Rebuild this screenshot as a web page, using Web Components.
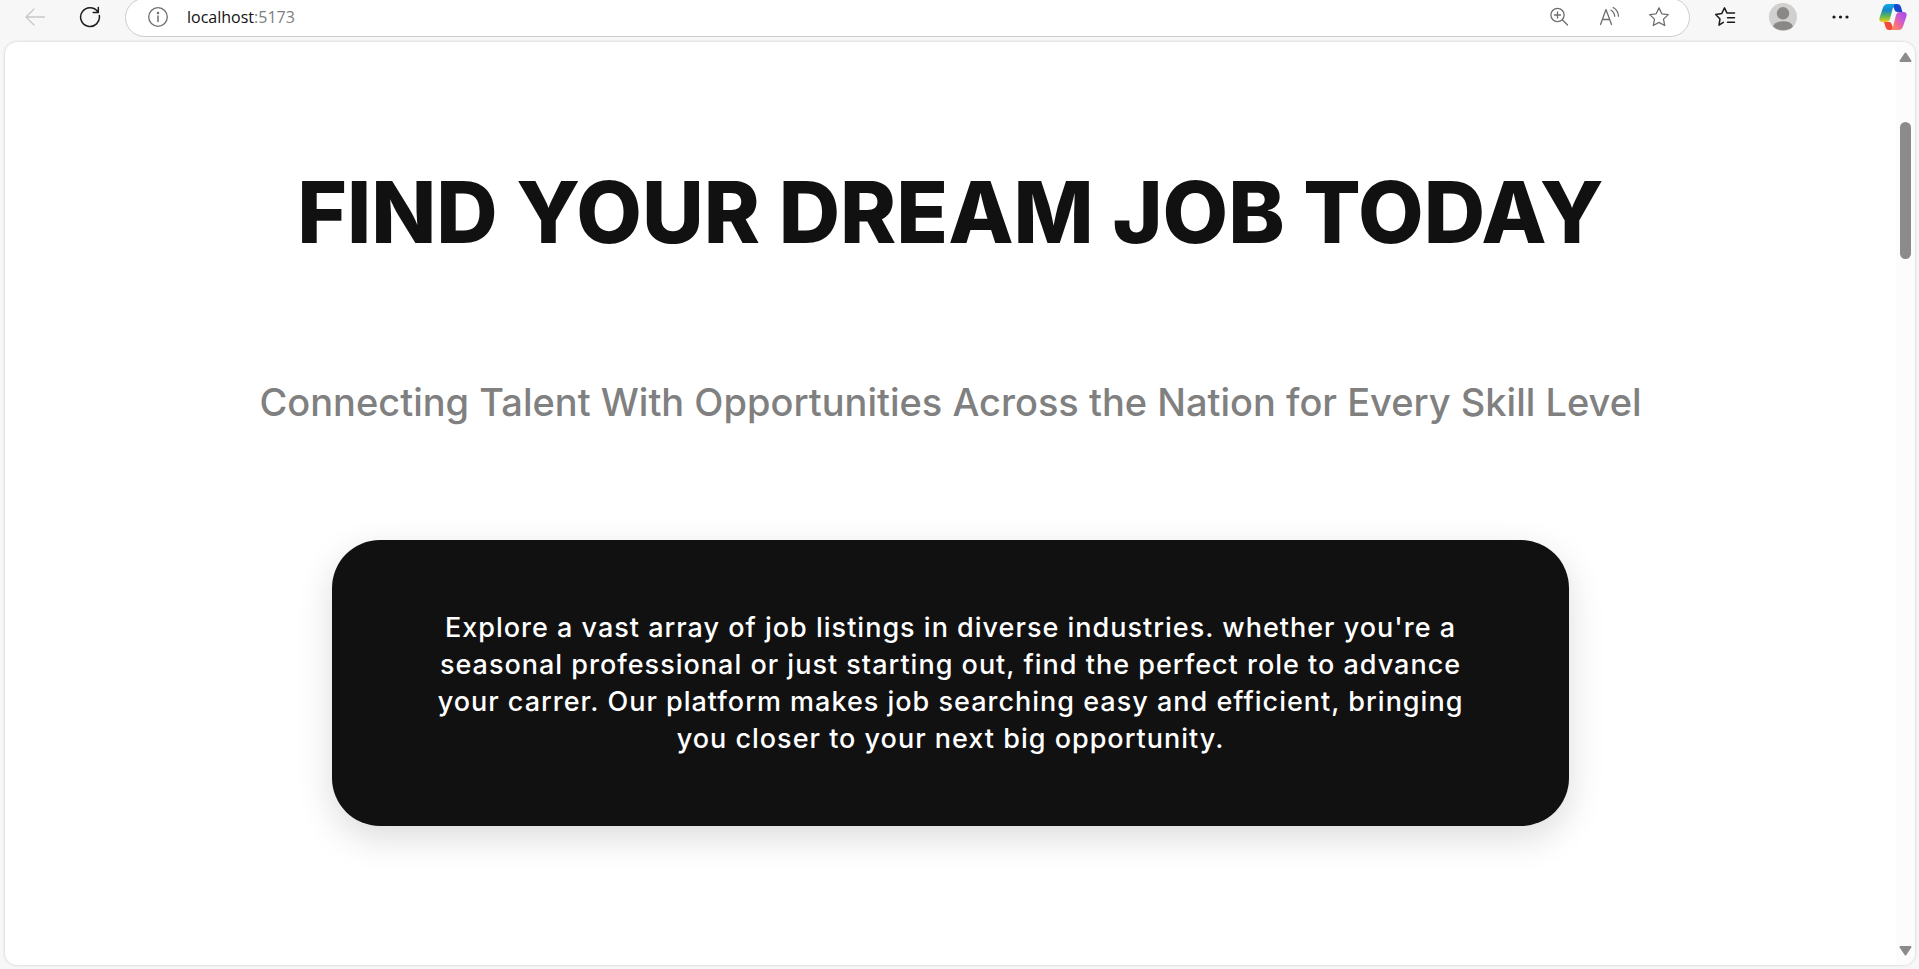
<!DOCTYPE html>
<html lang="en">
<head>
<meta charset="utf-8">
<title>Find Your Dream Job Today</title>
<style>
  html, body { height: 100%; margin: 0; }
  body { background: #f7f7f7; font-family: Inter, "Open Sans", sans-serif; color: #111; }
</style>
</head>
<body>
<browser-window>
  <browser-toolbar slot="toolbar"></browser-toolbar>
  <job-hero>
    <span slot="title">FIND YOUR DREAM JOB TODAY</span>
    <span slot="subtitle">Connecting Talent With Opportunities Across the Nation for Every Skill Level</span>
    <info-card>Explore a vast array of job listings in diverse industries. whether you're a<br>seasonal professional or just starting out, find the perfect role to advance<br>your carrer. Our platform makes job searching easy and efficient, bringing<br>you closer to your next big opportunity.</info-card>
  </job-hero>
  <scroll-track slot="scroll"></scroll-track>
</browser-window>

<template id="browser-window">
  <style>
    :host { display: flex; flex-direction: column; min-height: 100vh; }
    .page { flex: 1; display: flex; margin: 0 4px 4px 5px; background: #fff; border-radius: 12px; overflow: hidden; box-shadow: 0 0 3px rgba(0,0,0,.2); }
    main { flex: 1; min-width: 0; }
    ::slotted([slot=scroll]) { flex: none; }
  </style>
  <slot name="toolbar"></slot>
  <div class="page"><main><slot></slot></main><slot name="scroll"></slot></div>
</template>

<template id="tool-button">
  <style>
    :host { display: block; flex: none; width: 40px; }
    :host([compact]) { width: 28px; }
    button { display: flex; width: 100%; height: 32px; padding: 0; border: 0; background: none; align-items: center; justify-content: center; color: inherit; }
  </style>
  <button type="button"><slot></slot></button>
</template>

<template id="browser-toolbar">
  <style>
    :host { display: flex; align-items: center; height: 42px; box-sizing: border-box; padding: 0 12px 8px 15px; gap: 18px; color: #1b1b1b; overflow: hidden; }
    .nav { display: flex; gap: 15px; margin-right: -3px; }
    .address { flex: 1; display: flex; align-items: center; box-sizing: border-box; height: 39px; padding: 0 10px 0 12px; border: 1px solid #cdcdcd; border-radius: 20px; background: #fff; margin-right: -3px; color: #6e6e6e; }
    .url { flex: 1; margin-left: 9px; font: 16px/24px "Open Sans", sans-serif; color: #808080; outline: 0; white-space: nowrap; }
    .url b { font-weight: 400; color: #111; }
    .actions { display: flex; gap: 10px; }
    svg { display: block; fill: none; stroke: currentColor; stroke-linecap: round; stroke-linejoin: round; }
    svg.solid { stroke: none; }
    .off { color: #c8c8c8; }
  </style>
  <div class="nav">
    <tool-button class="off"><svg width="22" height="22" viewBox="0 0 22 22" stroke-width="1.3"><path d="M20.500 11H2M10 3 2 11l8 8"/></svg></tool-button>
    <tool-button><svg width="22" height="22" viewBox="0 0 22 22" stroke-width="1.5"><path d="M20.300 9.500A9.400 9.400 0 1 1 18.800 5.800M19.300 1.500V6.600H14.200"/></svg></tool-button>
  </div>
  <div class="address">
    <tool-button><svg width="22" height="22" viewBox="0 0 22 22" stroke-width="1.3"><circle cx="11" cy="11" r="9.300"/><path d="M11 10v5.500" stroke-width="1.500"/><circle cx="11" cy="7" r=".6" fill="currentColor"/></svg></tool-button>
    <div class="url" role="textbox" contenteditable="true" spellcheck="false" aria-label="Address"><b>localhost</b>:5173</div>
    <div class="actions">
      <tool-button><svg width="22" height="22" viewBox="0 0 22 22" stroke-width="1.3"><circle cx="9.500" cy="9" r="6.600"/><path d="m14.500 14 5 5M9.500 6v6M6.500 9h6"/></svg></tool-button>
      <tool-button><svg width="22" height="22" viewBox="0 0 22 22" stroke-width="1.300"><path d="M2.500 18.500 8 3.500 13.500 18.500M4.400 13.500h7.200M13 4.200q3.400 2 3.700 6M15.200 1.500q5 3 5.300 8.700"/></svg></tool-button>
      <tool-button><svg width="22" height="22" viewBox="0 0 22 22" stroke-width="1.300"><path d="m11 1.900 2.800 5.900 6.500.8-4.800 4.500 1.200 6.400L11 16.400l-5.700 3.100 1.200-6.400L1.700 8.600l6.500-.8z"/></svg></tool-button>
    </div>
  </div>
  <tool-button><svg width="22" height="22" viewBox="0 0 22 22" stroke-width="1.500"><path d="M9.300 16.400 5 19.200l1-6.300L1.700 8.500l6-.9 2.800-5.700 2.400 5H20.500M13.500 11.700H20.500M13.500 16.300H20.500"/></svg></tool-button>
  <tool-button><svg class="solid" width="28" height="28" viewBox="0 0 28 28"><circle cx="14" cy="14" r="14" fill="#d2d0ce"/><circle cx="14" cy="10.300" r="6.200" fill="#8a8886"/><path d="M4 23.500Q5.500 18.200 14 18.200t10 5.300Q20 27.300 14 27.300T4 23.500" fill="#8a8886"/></svg></tool-button>
  <tool-button><svg class="solid" width="20" height="8" viewBox="0 0 20 8"><g fill="#1b1b1b"><circle cx="3" cy="4" r="1.600"/><circle cx="9.500" cy="4" r="1.600"/><circle cx="16" cy="4" r="1.600"/></g></svg></tool-button>
  <tool-button compact><svg class="solid" width="28" height="28" viewBox="0 0 28 28">
    <defs>
      <linearGradient id="ga" x1="0" y1="0" x2="0" y2="1"><stop offset="0" stop-color="#0fa8e8"/><stop offset=".35" stop-color="#1687c9"/><stop offset=".65" stop-color="#55b45b"/><stop offset="1" stop-color="#f4cf16"/></linearGradient>
      <linearGradient id="gb" x1="1" y1="0" x2="0" y2="1"><stop offset="0" stop-color="#a24be8"/><stop offset=".35" stop-color="#c558d8"/><stop offset=".65" stop-color="#f36c8c"/><stop offset="1" stop-color="#fb9a50"/></linearGradient>
    </defs>
    <path d="M13 1h5q3 0 4 3l1.500 5h-5q-2.500 0-3.500-3.500z" fill="#1748cc"/>
    <path d="M8.500 1H16q-1.500 1.500-2.300 4.500L11 16q-.9 3-4 3H3.500Q-.5 19 .6 14.500L4 4.500Q5.300 1 8.500 1" fill="url(#ga)"/>
    <path d="M5 19h5.500q1.500-.3 2.500 3l1.500 5H10q-2.500 0-3.300-2.500z" fill="#f04a38"/>
    <path d="M19.500 27H12q1.500-1.500 2.300-4.500L17 12q.9-3 4-3h3.500q4 0 2.900 4.500L24 23.500q-1.300 3.500-4.500 3.500" fill="url(#gb)"/>
  </svg></tool-button>
</template>

<template id="scroll-track">
  <style>
    :host { display: flex; flex-direction: column; align-items: center; box-sizing: border-box; width: 19px; padding: 10px 0 9px; background: #fcfcfc; }
    svg { display: block; flex: none; fill: #8b8b8b; stroke: #8b8b8b; stroke-width: 2; stroke-linejoin: round; }
    .before { flex: 60; } .thumb { flex: 137; width: 11px; border-radius: 6px; background: #8b8b8b; } .after { flex: 687; }
  </style>
  <svg width="13" height="10" viewBox="0 0 13 10"><path d="M6.500 1.500 11.500 9h-10z"/></svg>
  <div class="before"></div><div class="thumb"></div><div class="after"></div>
  <svg width="13" height="10" viewBox="0 0 13 10"><path d="M6.500 8.500 11.500 1h-10z"/></svg>
</template>

<template id="job-hero">
  <style>
    :host { display: flex; flex-direction: column; align-items: center; gap: 110px; padding: 120px 24px; text-align: center; }
    h1, p { margin: 0; }
    h1 { font-size: 85px; line-height: 102px; font-weight: 800; color: #111; }
    p { font-size: 38px; line-height: 56px; font-weight: 500; color: #808080; }
  </style>
  <h1><slot name="title"></slot></h1>
  <p><slot name="subtitle"></slot></p>
  <slot></slot>
</template>

<template id="info-card">
  <style>
    :host { display: block; box-sizing: border-box; width: 100%; max-width: 1237px; padding: 69px 48px; border-radius: 48px; background: #111; color: #fff; box-shadow: 0 12px 36px rgba(0,0,0,.14); }
    p { margin: 0; font-size: 27px; line-height: 37px; font-weight: 500; letter-spacing: 1px; }
  </style>
  <p><slot></slot></p>
</template>

<script>
  for (const name of ["tool-button", "browser-toolbar", "scroll-track", "info-card", "job-hero", "browser-window"]) {
    customElements.define(name, class extends HTMLElement {
      constructor() {
        super();
        this.attachShadow({ mode: "open" }).append(document.getElementById(name).content.cloneNode(true));
      }
    });
  }
</script>
</body>
</html>
